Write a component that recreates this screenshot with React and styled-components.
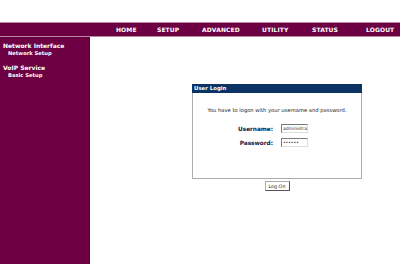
import React from "react";
import styled, { createGlobalStyle } from "styled-components";

const Global = createGlobalStyle`
  html, body { margin: 0; padding: 0; background: #fff; }
  body { font-family: "DejaVu Sans", Verdana, sans-serif; }
  #root { width: 400px; height: 264px; overflow: hidden; }
`;

const Page = styled.div`
  display: flex;
  flex-direction: column;
  width: 400px;
  height: 264px;
`;

const TopSpace = styled.div`
  height: 22px;
  background: #fff;
`;

const NavBar = styled.nav`
  height: 13px;
  background: #6d0042;
  border-top: 1px solid #b98aa3;
  border-bottom: 1px solid #b98aa3;
  display: grid;
  grid-template-columns: 41px 45px 60px 50px 54px auto;
  align-items: center;
  padding-left: 116px;
`;

const NavItem = styled.span`
  color: #fff;
  font-weight: bold;
  font-size: 6px;
  letter-spacing: 0.1px;
  white-space: nowrap;
`;

const Body = styled.div`
  flex: 1;
  display: flex;
`;

const Sidebar = styled.aside`
  width: 90px;
  background: #6d0042;
  padding: 5px 0 0 3px;
  box-sizing: border-box;
  display: flex;
  flex-direction: column;
`;

const Group = styled.div`
  display: flex;
  flex-direction: column;
  margin-bottom: 7px;
`;

const GroupTitle = styled.div`
  color: #fff;
  font-weight: bold;
  font-size: 6px;
  line-height: 8px;
`;

const GroupLink = styled.div`
  color: #fff;
  font-weight: bold;
  font-size: 5.2px;
  line-height: 7px;
  padding-left: 5px;
`;

const Main = styled.main`
  flex: 1;
  padding: 47px 0 0 102px;
  display: flex;
  flex-direction: column;
  align-items: flex-start;
`;

const LoginBox = styled.section`
  width: 170px;
  height: 95px;
  box-sizing: border-box;
  border: 1px solid #a8aeb0;
  border-top: none;
  display: flex;
  flex-direction: column;
  align-items: center;
`;

const BoxHeader = styled.div`
  align-self: stretch;
  height: 9px;
  margin: 0 -1px;
  background: #0b3363;
  color: #fff;
  font-weight: bold;
  font-size: 5.4px;
  line-height: 9px;
  padding-left: 2px;
`;

const Message = styled.p`
  margin: 14px 0 0 0;
  font-size: 5.2px;
  color: #222;
`;

const Fields = styled.div`
  margin-top: 11px;
  display: grid;
  grid-template-columns: auto 27px;
  column-gap: 8px;
  row-gap: 5px;
  align-items: center;
  padding-right: 8px;
`;

const Label = styled.label`
  font-weight: bold;
  font-size: 5.8px;
  letter-spacing: -0.05px;
  color: #0c1a4a;
  text-align: right;
`;

const Input = styled.input`
  width: 27px;
  height: 9px;
  box-sizing: border-box;
  margin: 0;
  border: 1px solid #7a7a7a;
  border-right-color: #ddd;
  border-bottom-color: #ddd;
  background: #fff;
  font-family: "DejaVu Sans", sans-serif;
  font-size: 4.5px;
  padding: 0 0 0 1px;
  color: #333;
`;

const ButtonRow = styled.div`
  width: 170px;
  display: flex;
  justify-content: center;
  margin-top: 2px;
`;

const Button = styled.button`
  width: 25px;
  height: 10px;
  padding: 0;
  font-family: "DejaVu Sans", sans-serif;
  font-size: 4.8px;
  background: #fff;
  color: #222;
  border: 1px solid #555;
  border-top-color: #aaa;
  border-left-color: #aaa;
`;

const navItems = ["HOME", "SETUP", "ADVANCED", "UTILITY", "STATUS", "LOGOUT"];

export default function App() {
  return (
    <>
      <Global />
      <Page>
        <TopSpace />
        <NavBar>
          {navItems.map((n) => (
            <NavItem key={n}>{n}</NavItem>
          ))}
        </NavBar>
        <Body>
          <Sidebar>
            <Group>
              <GroupTitle>Network Interface</GroupTitle>
              <GroupLink>Network Setup</GroupLink>
            </Group>
            <Group>
              <GroupTitle>VoIP Service</GroupTitle>
              <GroupLink>Basic Setup</GroupLink>
            </Group>
          </Sidebar>
          <Main>
            <LoginBox>
              <BoxHeader>User Login</BoxHeader>
              <Message>You have to logon with your username and password.</Message>
              <Fields>
                <Label>Username:</Label>
                <Input type="text" readOnly value="administrator" />
                <Label>Password:</Label>
                <Input type="password" readOnly value="123456" />
              </Fields>
            </LoginBox>
            <ButtonRow>
              <Button>Log On</Button>
            </ButtonRow>
          </Main>
        </Body>
      </Page>
    </>
  );
}
